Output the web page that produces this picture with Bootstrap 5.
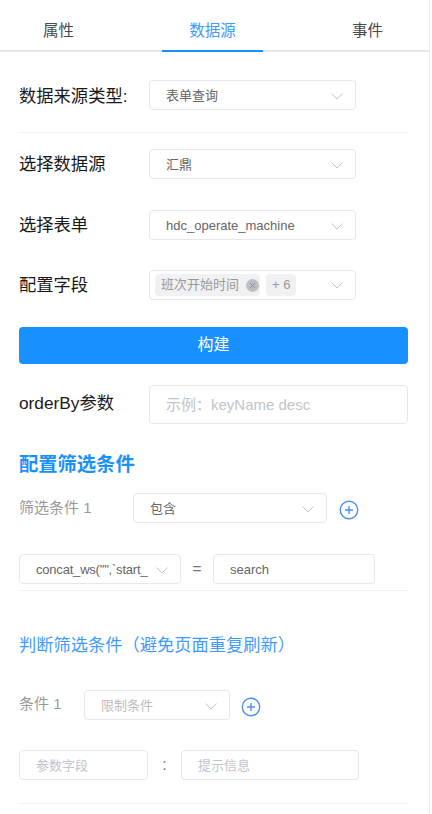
<!DOCTYPE html>
<html lang="zh">
<head>
<meta charset="utf-8">
<title>数据源</title>
<link href="https://cdn.jsdelivr.net/npm/bootstrap@5.3.0/dist/css/bootstrap.min.css" rel="stylesheet">
<style>
html,body{height:100%;overflow:hidden}
body{font-family:"Liberation Sans","Noto Sans CJK SC",sans-serif;color:#000;background:#fff;font-size:14px}
.shell{width:430px;height:814px;border-right:1px solid #e9e9ee;overflow:hidden}
.tabbar{height:52px;border-bottom:2px solid #e4e7ed;padding-top:21px}
.tabitem{font-size:15.5px;line-height:20px;color:#4a4a4a;flex:none}
.tabitem.on{color:#3f9bff;width:101px;height:31px;text-align:center;border-bottom:2px solid #1890ff}
.tab-a{margin-left:43px;margin-right:88px}
.tab-c{margin-left:89px}
.body-pad{padding:0 21px 0 19px}
.lab{font-size:17.3px;line-height:24px;width:130px;flex:none;color:#1a1a1a}
.pick{height:30px;background:#fff;border:1px solid #e4e7ed;border-radius:4px;display:flex;align-items:center;padding:2px 12px 0 16px;font-size:13px;color:#666;white-space:nowrap;overflow:hidden}
.pick.faint{color:#bdbdc2}
.w207{width:207px}
.chev{margin-left:auto;flex:none}
.tagbox{padding-left:5px;padding-top:0;gap:6px}
.tagchip{background:#f0f1f3;border-radius:4px;height:22px;padding:0 1px 0 6px;display:flex;align-items:center;gap:7px;color:#999;font-size:13px}
.tagchip.plain{padding:0 6px}
.tagx{width:13px;height:13px;background:#bcbec3;border-radius:50%;display:flex;align-items:center;justify-content:center}
.btn.build{background:#1890ff;border:0;border-radius:4px;color:#fff;height:37px;font-size:16px;width:100%;display:block;padding:0 0 2px}
.textin{height:39px;border:1px solid #e4e7ed;border-radius:4px;padding:0 16px;font-size:15px;width:259px;outline:0;background:#fff}
.textin::placeholder,.smallin::placeholder{color:#c0c4cc;opacity:1}
.smallin{height:30px;border:1px solid #e4e7ed;border-radius:4px;padding:0 16px;font-size:13px;outline:0;background:#fff;color:#666}
.h-blue{font-size:19.3px;line-height:26px;font-weight:700;color:#1890ff}
.h-blue2{font-size:17.25px;line-height:26px;color:#3f9bff}
.sublab{font-size:15px;color:#999;line-height:20px}
.rule{height:1px;background:#f0f1f3}
.opsep{color:#777;font-size:16px;text-align:center;flex:none}
.addbtn{flex:none;display:block}
.row-a{margin-top:28px}
.row-a .lab{padding-top:2px}
.rule-a{margin-top:22px}
.row-b{margin-top:16px}
.row-c{margin-top:31px}
.row-d{margin-top:30px}
.btn.btn-a{margin-top:27px}
.row-e{margin-top:21px}
.row-e .lab{margin-top:-3px}
.head-a{margin-top:28px}
.row-f{margin-top:15px}
.lab-f{width:114px;flex:none;padding-top:5px}
.pick-f{width:194px}
.add-f{margin:7px 0 0 12px}
.row-g{margin-top:31px}
.pick-g{width:162px}
.clip{display:block;letter-spacing:-.2px}
.sep-g{width:32px}
.in-g{width:162px}
.rule-g{margin-top:6px}
.head-b{margin-top:41px}
.row-h{margin-top:32px}
.lab-h{width:65px;flex:none;padding-top:4px}
.pick-h{width:146px}
.add-h{margin:7px 0 0 11px}
.row-i{margin-top:30px}
.in-i1{width:129px}
.sep-i{width:33px}
.in-i2{width:178px}
.rule-i{margin-top:23px}
</style>
</head>
<body>
<div class="shell">
  <div class="d-flex tabbar">
    <div class="tabitem tab-a">属性</div>
    <div class="tabitem on">数据源</div>
    <div class="tabitem tab-c">事件</div>
  </div>
  <div class="body-pad">
    <div class="d-flex align-items-center row-a">
      <div class="lab">数据来源类型:</div>
      <div class="pick w207">表单查询<svg class="chev" width="12" height="7" viewBox="0 0 12 7"><path d="M.5.5L6 6l5.500-5.500" fill="none" stroke="#c0c4cc"/></svg></div>
    </div>
    <div class="rule rule-a"></div>
    <div class="d-flex align-items-center row-b">
      <div class="lab">选择数据源</div>
      <div class="pick w207">汇鼎<svg class="chev" width="12" height="7" viewBox="0 0 12 7"><path d="M.5.5L6 6l5.500-5.500" fill="none" stroke="#c0c4cc"/></svg></div>
    </div>
    <div class="d-flex align-items-center row-c">
      <div class="lab">选择表单</div>
      <div class="pick w207">hdc_operate_machine<svg class="chev" width="12" height="7" viewBox="0 0 12 7"><path d="M.5.5L6 6l5.500-5.500" fill="none" stroke="#c0c4cc"/></svg></div>
    </div>
    <div class="d-flex align-items-center row-d">
      <div class="lab">配置字段</div>
      <div class="pick w207 tagbox">
        <span class="tagchip">班次开始时间<span class="tagx"><svg width="7" height="7" viewBox="0 0 7 7"><path d="M1 1l5 5M6 1L1 6" stroke="#8b8d92"/></svg></span></span>
        <span class="tagchip plain">+ 6</span>
        <svg class="chev" width="12" height="7" viewBox="0 0 12 7"><path d="M.5.5L6 6l5.500-5.500" fill="none" stroke="#c0c4cc"/></svg>
      </div>
    </div>
    <button type="button" class="btn btn-primary build btn-a">构建</button>
    <div class="d-flex align-items-center row-e">
      <div class="lab">orderBy参数</div>
      <input class="textin" placeholder="示例：keyName desc">
    </div>
    <div class="h-blue head-a">配置筛选条件</div>
    <div class="d-flex align-items-start row-f">
      <div class="sublab lab-f">筛选条件 1</div>
      <div class="pick pick-f">包含<svg class="chev" width="12" height="7" viewBox="0 0 12 7"><path d="M.5.5L6 6l5.500-5.500" fill="none" stroke="#c0c4cc"/></svg></div>
      <svg class="addbtn add-f" width="20" height="20" viewBox="0 0 20 20"><circle cx="10" cy="10" r="8.700" fill="none" stroke="#4a8ff5" stroke-width="1.4"/><path d="M10 6v8M6 10h8" stroke="#4a8ff5" stroke-width="1.4"/></svg>
    </div>
    <div class="d-flex align-items-center row-g">
      <div class="pick pick-g"><span class="clip">concat_ws("",`start_</span><svg class="chev" width="12" height="7" viewBox="0 0 12 7"><path d="M.5.5L6 6l5.500-5.500" fill="none" stroke="#c0c4cc"/></svg></div>
      <div class="opsep sep-g">=</div>
      <input class="smallin in-g" value="search">
    </div>
    <div class="rule rule-g"></div>
    <div class="h-blue2 head-b">判断筛选条件（避免页面重复刷新）</div>
    <div class="d-flex align-items-start row-h">
      <div class="sublab lab-h">条件 1</div>
      <div class="pick faint pick-h">限制条件<svg class="chev" width="12" height="7" viewBox="0 0 12 7"><path d="M.5.5L6 6l5.500-5.500" fill="none" stroke="#c0c4cc"/></svg></div>
      <svg class="addbtn add-h" width="20" height="20" viewBox="0 0 20 20"><circle cx="10" cy="10" r="8.700" fill="none" stroke="#4a8ff5" stroke-width="1.4"/><path d="M10 6v8M6 10h8" stroke="#4a8ff5" stroke-width="1.4"/></svg>
    </div>
    <div class="d-flex align-items-center row-i">
      <input class="smallin in-i1" placeholder="参数字段">
      <div class="opsep sep-i">:</div>
      <input class="smallin in-i2" placeholder="提示信息">
    </div>
    <div class="rule rule-i"></div>
  </div>
</div>
<script src="https://cdn.jsdelivr.net/npm/bootstrap@5.3.0/dist/js/bootstrap.bundle.min.js"></script>
</body>
</html>
